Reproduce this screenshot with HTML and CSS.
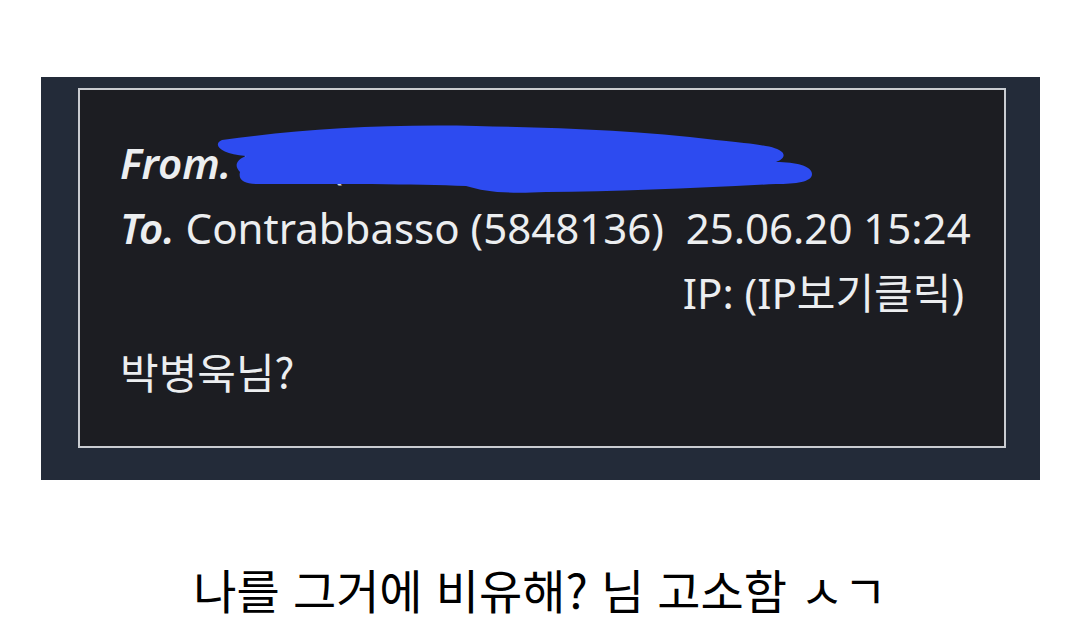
FILE: index.html
```html
<!DOCTYPE html>
<html lang="ko">
<head>
  <meta charset="UTF-8">
  <meta name="viewport" content="width=device-width, initial-scale=1.0">
  <title>쪽지</title>
  <link rel="stylesheet" href="styles.css">
</head>
<body>
  <div class="panel">
    <div class="memo">
      <div class="line from">
        <em>From.</em>
        <span class="sender">익명 (0000000)</span>
        <!-- 가림 낙서 -->
        <svg class="scribble" viewBox="0 0 600 80">
          <path d="M6 20 C80 10 160 4 260 6 C340 8 420 10 500 20 C540 24 560 26 566 32 C570 36 566 40 560 42 C580 42 596 46 596 54 C596 62 580 64 560 64 C480 68 400 72 330 72 C290 74 270 72 250 66 C200 64 120 64 40 64 C28 64 22 60 24 52 C18 46 20 40 30 36 C4 34 -4 24 6 20 Z" fill="#2d4bf0"/>
        </svg>
      </div>
      <div class="line"><em>To.</em> Contrabbasso (5848136)&nbsp; 25.06.20 15:24</div>
      <div class="line ip">IP: (IP보기클릭)</div>
      <div class="line body">박병욱님?</div>
    </div>
  </div>

  <p class="caption">나를 그거에 비유해? 님 고소함 ㅅㄱ</p>
</body>
</html>
```

FILE: styles.css
```css
body {
  margin: 0;
  padding: 0;
  background-color: #fff;
  font-family: "Noto Sans", "Noto Sans CJK KR", sans-serif;
}

.panel {
  margin: 77px 40px 0 41px;
  height: 403px;
  box-sizing: border-box;
  background-color: #232b39;
  padding: 11px 34px 32px 37px;
}

.memo {
  height: 100%;
  box-sizing: border-box;
  border: 2px solid #c9ccd1;
  background-color: #1c1d22;
  color: #eceef0;
  padding: 40px 40px 0 40px;
  font-size: 42px;
}

.line {
  height: 65px;
  line-height: 65px;
  white-space: nowrap;
}

.line em {
  font-weight: 600;
}

.from {
  position: relative;
}

.sender {
  color: #cfd3d8;
}

.scribble {
  position: absolute;
  left: 96px;
  top: -10px;
  width: 600px;
  height: 80px;
}

.ip {
  text-align: right;
}

.body {
  margin-top: 13px;
  font-family: "Noto Sans CJK KR", sans-serif;
  font-size: 42px;
}

.caption {
  margin: 74px 0 0 0;
  text-align: center;
  font-family: "Noto Sans CJK KR", sans-serif;
  font-size: 47px;
  color: #000;
}
```
